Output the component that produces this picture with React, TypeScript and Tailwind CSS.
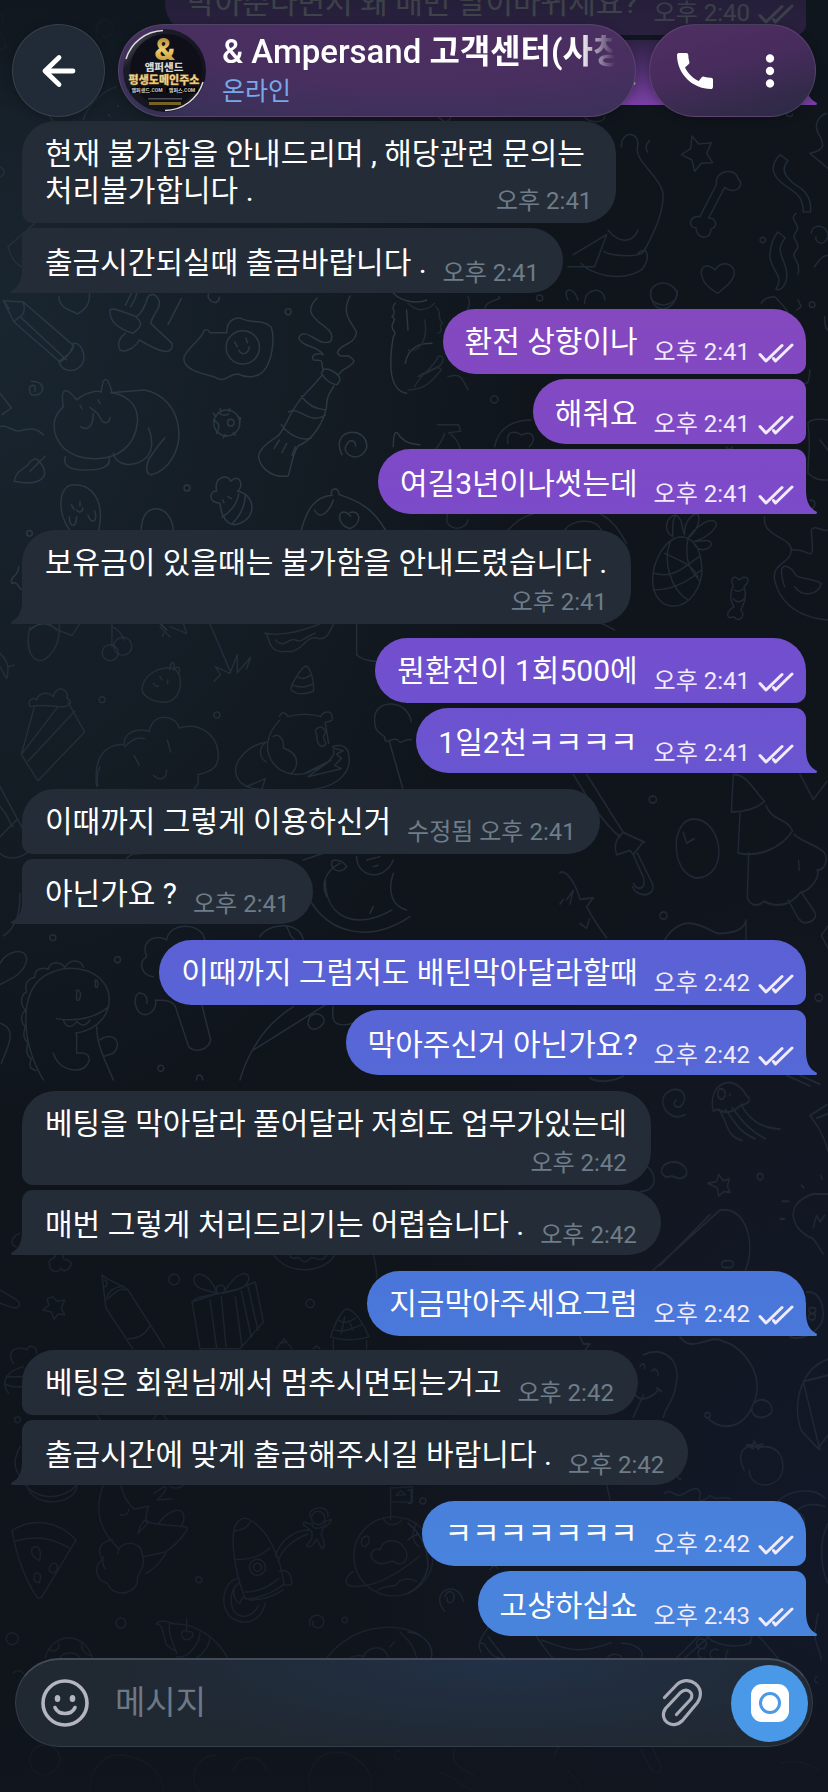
import { clsx } from 'clsx';
import { MdCall, MdMoreVert } from 'react-icons/md';

interface Message {
  out?: boolean;
  lines: string[];
  time: string;
  wide?: boolean;
}

// Consecutive messages from one side share a group; only the last one gets a tail.
const groups: Message[][] = [
  [
    { out: true, lines: ['막아준다면서 왜 매번 말이바뀌세요?'], time: '오후 2:40' },
    { out: true, lines: ['.'], time: '오후 2:41', wide: true },
  ],
  [
    { lines: ['현재 불가함을 안내드리며 , 해당관련 문의는 ', '처리불가합니다 .'], time: '오후 2:41' },
    { lines: ['출금시간되실때 출금바랍니다 .'], time: '오후 2:41' },
  ],
  [
    { out: true, lines: ['환전 상향이나'], time: '오후 2:41' },
    { out: true, lines: ['해줘요'], time: '오후 2:41' },
    { out: true, lines: ['여길3년이나썻는데'], time: '오후 2:41' },
  ],
  [{ lines: ['보유금이 있을때는 불가함을 안내드렸습니다 .', ''], time: '오후 2:41' }],
  [
    { out: true, lines: ['뭔환전이 1회500에'], time: '오후 2:41' },
    { out: true, lines: ['1일2천ㅋㅋㅋㅋ'], time: '오후 2:41' },
  ],
  [
    { lines: ['이때까지 그렇게 이용하신거'], time: '수정됨 오후 2:41' },
    { lines: ['아닌가요 ?'], time: '오후 2:41' },
  ],
  [
    { out: true, lines: ['이때까지 그럼저도 배틴막아달라할때'], time: '오후 2:42' },
    { out: true, lines: ['막아주신거 아닌가요?'], time: '오후 2:42' },
  ],
  [
    { lines: ['베팅을 막아달라 풀어달라 저희도 업무가있는데', ''], time: '오후 2:42' },
    { lines: ['매번 그렇게 처리드리기는 어렵습니다 .'], time: '오후 2:42' },
  ],
  [{ out: true, lines: ['지금막아주세요그럼'], time: '오후 2:42' }],
  [
    { lines: ['베팅은 회원님께서 멈추시면되는거고'], time: '오후 2:42' },
    { lines: ['출금시간에 맞게 출금해주시길 바랍니다 .'], time: '오후 2:42' },
  ],
  [
    { out: true, lines: ['ㅋㅋㅋㅋㅋㅋㅋ'], time: '오후 2:42' },
    { out: true, lines: ['고샹하십쇼'], time: '오후 2:43' },
  ],
];

// The fixed attachment lets every sent bubble show its own slice of one gradient.
const outFill =
  'bg-fixed bg-[linear-gradient(180deg,#8b46b6_0%,#8448bf_18%,#7d4ac8_27%,#7050cf_38%,#5a62d5_54%,#4a76da_72%,#4882dc_86%,#4886de_100%)]';

const doodles = [
  {
    at: 'translate(408 0) scale(.3333)',
    color: '#212b35',
    d: 'M852 408l20 24 38-4-14 32 18 28-34 2-20 24-8-34-32-16 28-18zM926 552l-50 98c-30-6-40 32-12 34 0 36 48 36 44 4 26-12 14-34-6-34l48-92c30 26 64-6 40-26-6-36-72-24-64 16zM1116 464l24 18c-30 32 4 62 40 84 26 20 30 44 28 70h-22c0-44-20-56-50-76-50-34-50-64-20-96zM1164 640c-26 20 20 34 0 56s20 34 0 56 18 30 6 70M1110 696l22 18c-40 44 12 70 4 120-4 30-24 40-32 32 30-40-24-60-18-104 2-30 10-50 24-66zM930 880c-80-42-50-110-8-70 20-42 90-8 38 44zM640 440c0-54 60-44 48 4-6 40 62 80 76 130 8 60-30 130-56 180-20 24-110 10-120 0M690 760c30-30 40 20 10 50-60 40-160 10-180-20M600 690c40 50 80 30 90 0M480 800h80l36-96-100 60M1210 700c0-30 50-30 50 10-10 30-40 20-36 0M1220 800c20-30 30-40 60-30M1206 460c50-10 40-30 30-50-20-30-10-60 20-70M1206 460l60 50M728 890c-8-50 70-56 80-6-10 40-70 40-80 6zM480 900c-20-40 20-40 30 0M530 910c0-50 60-50 60-10M1064 712a8 8 0 1 0 1 16 8 8 0 1 0-1-16M724 422c-12 14-12 20-6 34M90 350c20 20 30 20 40 0M530 350c10 20 60 20 60 0M1136 342c0 10 18 10 18 0',
  },
  {
    at: 'translate(0 0) scale(.3333)',
    color: '#22303b',
    d: 'M316 60c-30 4-30 50 0 50 40-4 30-60-12-50-20 10-20 60 0 66M250 360c10-40 60-90 100-100M150 350l14 20M24 740l80-70M24 740c10 40 30 60 50 60M0 40c10 10 12 30 8 40M0 500c16 10 16 26 0 30M0 100l20 40-20 10M352 316l4 4M326 344l4 4',
  },
  {
    at: 'translate(0 290) scale(.3333)',
    color: '#2a3843',
    d: 'M10 32l60 4 150 130c-8 20-20 40-40 50L42 96zM10 32l18 24M42 96c10-20 40-10 28-60M60 80l140 130M176 214c10-6 50-30 44-54 20-4 40 30 28 60-20 30-60 30-72-6M176 20c4 40 40 40 56 52 20-10 40-30 36-60M330 60c10-10 50 10 78 20 20 20 20 30-10 50-60-20-70-50-68-70zM408 80c20-10 30-40 36-60 20-20 40 10 32 30s-20 30-24 50l64 60c4 20-10 26-24 24s-50-20-74-34c-10 20-40 40-58 30-10-20 0-40 16-50M376 46c10-20 16-30 20-40M392 50c10-16 16-30 18-40M544 26l-40 78M680 128c0-40 30-50 50-40 30 12 60 0 84 24 10 30 4 80-10 110-20 50-70 40-90 30-30 0-40 30-68 10-30-10-100-20-94-60 10-30 50-50 60-80 10-6 16 0 18 6zM728 122a50 50 0 1 0 1 100 50 50 0 1 0-1-100M704 156l8 14M738 144l4 14M716 180c10 20 30 10 32-10M864 56a9 9 0 1 0 1 18 9 9 0 1 0-1-18M626 12c-10 20 30 40 32 10M190 350c-10-60 10-60 40-20 20-20 60-30 74-24 4-50 20-50 32 2 60 10 80 50 76 90-6 70-60 110-130 108-80 0-120-50-120-100 0-20 10-40 28-56M332 308l100-8c60 10 100 60 104 120 6 60-30 120-80 134-30 0-10-50 0-60 10-16 20-30 38-50M340 490c10 40 60 40 90 20 30-20 30-60 16-96M196 500c-10 30 20 40 60 40 50 0 80-10 70-40M240 346l6 10M294 330l6 10M270 352c10 10 20 10 30 30 10 26 30 16 30 0M280 370c0 50-26 50-38 40M680 360a38 38 0 1 0 1 78 38 38 0 1 0-1-78M692 388a10 10 0 1 0 1 20 10 10 0 1 0-1-20M640 390c20 10 20 20 10 40M656 366c10 14 20 10 30 6M712 380l10 4-4 16M640 370l8 10M660 356l4 8M690 356l-2 8M670 444l6-10M706 436l-6-8M970 240c10-10 50 10 50 30l-8 14c-20 0-40-20-48-34zM964 258c-40 50-50 50-70 80-30 40-40 80-60 100-30 20-60 40-58 66 10 40 50 60 88 54 10-20 10-60 30-90 50-20 80-80 86-120 0-30 10-40 22-60M904 318c20 30 50 40 74 42M866 366c30-20 60 40 110 10M844 404c20 30 60 50 90 40M838 450l-16 26M860 460l-14 28M886 470l-10 26M970 240c-10-20 10-30-30-30-10-20 20-20 30-16-20-30-60-20-74-50 20-40 60 30 96 10 20-40-50-50-60-90 0-20 10-30 20-40M1018 252c10-20 40-20 44-40-20-30-40 0-50-24 10-30 50-20 58-60-10-30-50-50-20-110M1180 10c30 30 80 30 100 20M1186 40c-20 20 10 20-10 40 20 10-10 20 4 40 10 10 0 20 0 20-10 60-20 160 40 170M1216 220c10-60 60-60 80-60M1220 60l4 60M1026 494c-40-80 80-90 74-20-20 50-80 20-60-10 10-20 30-10 26 4M104 304c10-30-30-20-10 10 40 10 50-40 0-40M42 574c10-40 30-30 50-60 10-10 20-10 30 6 30 40 0 70-80 54M90 544l46-46M222 584c70 0 90 70 74 136M222 584c-50 0-50 90-14 134M240 634v14M214 644l8 14M230 660c10 14 20 0 18-6M208 680c0 30 20 40 22 0M264 676c10 30 30 20 20-14M424 720c0-90 90-80 96 0M80 730a8 8 0 1 0 17 0 8 8 0 1 0-17 0M552 594a9 9 0 1 0 18 0 9 9 0 1 0-18 0M650 604c-10-50 40-50 42-30 30-30 40 20 20 30 60 10 60 90-8 100-20 0-40-20-44-64-40-4-30-40-10-36M736 612c0 40-20 70-40 90M716 612c-4 30-20 50-50 70M668 630l4 8M684 620l10 6M904 720c16-60 40-100 92-104-10-20 20-30 22-2 60 20 100 40 138 106M944 660c20 40 50-10 56-30M1050 668c30-10 40 30 0 48-40-10-40-60-10-48l12 10M0 410c20-10 40 20 60 12 40-10 50-6 70 12M0 310l34 44-28 20M36 880c-10-20 20-20 20-50M36 880c20-10 20 20 28 18M1180 470c0-50 10-50 20-30 20 20 30 20 60 24M90 1020c30-30 60-20 80 0M480 1000l20 20',
  },
  {
    at: 'translate(408 290) scale(.3333)',
    color: '#212a35',
    d: 'M0 40c30 30 60 20 80 0M84 50c20 20 0 30 20 50-20 10 10 20-14 30M50 90c10 50-10 100-50 90M180 20c20 50-40 30 20 110M232 60c-10-30 60-30 40-40M20 290c10-30 60-60 70-90 20-10 20 20 0 30s-50 20-60 30c40-10 60-40 70-20-20 20-40 60-100 60M120 260c40-10 40 0 60 40M386 24a9 9 0 1 0 18 0 9 9 0 1 0-18 0M248 328a11 11 0 1 0 22 0 11 11 0 1 0-22 0M260 470c10-60 60-80 110-80M300 460c-10-50 40-30 40-24 30-20 50 10 24 34M88 404h64l6 20-36 4c30 20 30 40 36 50M110 430c-10 30-20 40-30 50M728 0c-4 80 80 70 80 0M1060 40c10-20 30-20 40-20 20 20 40 40 40 50M1170 30l10 20-14 10M1204 44a8 8 0 1 0 17 0 8 8 0 1 0-17 0M1200 400c10-20 60-10 60-10M1200 400c10 60 0 100 0 150 20 20 40 20 60 20M1236 450l24 30M1250 80c0 40 10 40 10 40M1206 240c-4 50-10 40-20 40M956 470a8 8 0 1 0 16 0M1206 630c20 0 20 20 0 30M120 670c-20 50 50 60 60 20M300 720c20-20 40-40 80-50M470 720c20-30 90-40 110 0M576 670c50 30 60 60 80 90M794 740c-30-20-20-60 10-66M794 740c0-40 0-70 16-60s10 40 20 54c-4-40 30-70 40-60 10 20-10 60-30 70 20-30 60-60 80-50s-20 50-60 60c20 0 50-10 50 10-10 20-40 20-50 0M824 740c-50 0-90 70-90 130 0 50 30 80 64 78 50 0 84-60 84-110-4-60-20-90-58-98zM740 850c60 20 100-30 134-50M736 900c60 0 110-30 144-60M790 750c-30 60 0 150 50 180M840 744c-10 60 0 90 36 130M770 790c40 20 80 30 100 70M976 890c-10-20 0-40 18-20 20-20 40 0 14 20 10 30 0 50-10 70 20 20-10 40-20 20-20 10-30-10 0-30-14-20-10-50-2-60zM980 900c10 10 20 0 28-4M976 926c10 14 24 10 34 0M1070 680c-10 60 80 60 80 100s-60 40-50 90c10 50 50 110 160 120M1130 890c-30-90 20-60 30-40s40 10 80 30c-10 40-60 40-80 10M1150 780c60-10 70 60 60-60 10-20 40 10 48 0M480 990c60-20 80 0 140 30',
  },
  {
    at: 'translate(0 620) scale(.3333)',
    color: '#232e39',
    d: 'M90 20c-20 80 20 130 60 84 20-20 30-50 28-90M150 10c10 20 50 30 66 36l24-36M336 10v70M336 20c20 10 30 20 36 40M330 74a24 24 0 1 0 1 48 24 24 0 1 0-1-48M368 52a27 27 0 1 0 1 54 27 27 0 1 0-1-54M0 100c20 20 30 40 20 76L0 140M24 140l18-4M480 20l30 30M490 40l-2 10M510 20l50 20-10-30M630 12l60 140M690 160l-44-20 16 24-20 20M690 160l22-56v54l40-46-12 34M800 40c10 40 20 60 60 54 40 10 60-50 90-40s40-20 50-40M794 40c60 10 120-10 170-30M826 60c30 30 40-10 60 0s30-10 60-20M1070 12v92c20 20 60 20 60 20M430 190c10-30 50-50 90-46 30 20 30 80-10 100-30 10-100-10-80-54zM510 150c0-30 20-30 10 0 20-20 20 0 16 10M460 190c6 10 12 10 16 8M480 170l6 10M504 180l-2 10M918 138c-10 0-50 60-44 72 20 20 50 10 66 4 4-20-6-70-22-76zM890 170c20 10 30 4 40-4M878 196c30 10 40 4 62-4M90 260c-10-20 10-30 20-20 10-30 40-20 50-10 10-40 50-20 40 4 20 10 10 20 0 24-20 10-50-10-110 2zM102 264L64 404l50 78 140-146-50-90M64 404l110-144M84 424l140-150M306 230a9 9 0 1 0 1 18 9 9 0 1 0-1-18M650 276a9 9 0 1 0 1 18 9 9 0 1 0-1-18M290 500c-10-80 20-130 82-126 0-40 40-50 76-40 10-60 80-50 90-10 60-20 110 20 116 70s-20 60-60 70c0 20 4 30-10 40M374 380c20-20 40-30 60-24M402 406l16 30M502 360l10 36M460 466c20 20 40 10 40-16M300 440c-10 20-10 40-6 56M838 290c10-20 20-10 26 0 30-10 70-10 98 0 10-20 40-20 34 10-10 10-20 0-20 10l10 60M840 300c-40 40-50 90-20 130 30 40 90 40 120 20 40-10 70-50 60-60M850 384c60 20 40 70 20 78M820 350c10-10 34 0 30 34M946 330c20-20 30 0 30 10-20 20 20 30-10 40-20-10-10-20-20-50zM800 366c-60 10-100 60-92 94 10 60 100 50 200 50s140-50 140-90-20-50-50-40M800 366c-30 20-20 50 0 60M914 460l80-40-70 50 100-24-20-10 20-20-14-14 20-10-30-8M740 500l56-24-10 30M1124 296c0-60 100-60 110 10M1124 300c0 40 20 40 30 50 0 30 20 0 40 10 10 20 20-10 40 0M1168 364l40 140M0 500l70 130M0 560c30 30 30 60 40 60M0 700c20 20 60 20 90-10M0 650l50-50M60 820c0 60-10 100-50 128M158 944a9 9 0 1 0 1 18 9 9 0 1 0-1-18M0 1030c20-40 80-50 80-10-10 50-60 60-80 74M352 1010a9 9 0 1 0 1 18 9 9 0 1 0-1-18M130 1380c-70-120-70-260 0-310 80-50 180-20 196 50 10 60-30 110-100 120M170 1196c60 10 110 0 154-34M190 1200c10 30 30 20 40 4 20 20 30 10 40-4M76 1220c-20-20-10-40 0-50-20-20-10-50 4-54-10-30 10-40 24-44 0-30 30-30 40-24 10-30 40-20 50-6 20-30 50-20 56 0M76 1220c-10 30 0 40 8 50-10 30 0 40 10 46-10 30 0 30 14 36M230 1110c20 0 10 40 0 30zM286 1080c10 0 10 30 0 20zM230 1240v60c60-10 40 50 0 50s-60-20-70-50M290 1220c0 60 30 110 50 160M300 1260c40-30 70 10 40 40l-30 10M0 1210c30 10 40 30 20 80l-16 40M440 1010c-20-50 30-70 60-50 10-60 110-50 114 0M440 1010c-30 20-10 60 20 60M440 1150c10-30-40-50-34 0 10 60 70 30 60-10 20 0 50 0 60 20l40 120c20 20 60 10 66-20l-26-104M482 1336a9 9 0 1 0 1 18 9 9 0 1 0-1-18M720 1380c30-100 80-170 160-220M760 1290l240-150M930 1190c20-20 50 0 40 20-20 30-60 20-40-20zM1000 1160c-10 60 20 60 60 50M780 950c20-40 120-50 130 10M860 920c10 20 10 30 24 40M910 800c60 150 200 170 320 90M976 780c0 120 100 150 200 90M1070 710c0 60 80 80 110 10M1000 720c-20 20 20 50 40 20-10-20-30-20-40-20M1180 760c-20 60 0 100 40 110M910 720l60-20M980 830c-20-40 0-80 40-100M1110 880l10-20M1100 720l40-10M1120 740l14-4M380 715c20-20 30-10 40-15M590 1380c0-20 16-20 18 0',
  },
  {
    at: 'translate(560 770) scale(.3333 .4464)',
    color: '#202834',
    d: 'M80 10l110 130M40 10c40 50 90 110 140 140M190 140c-20 10-30 30-20 50l40-10 10 10 30-30M190 140l64 22M220 190l30 50c10 30-20 30-30 14M232 186l46 70c10 30-50 30-60 6M278 58a11 8 0 1 0 1 16 11 8 0 1 0-1-16M400 110c90 0 110 130 10 132-80-10-80-130-10-132zM370 140l10 24 22-10M520 10l-6 84c50 0 80-10 100-24-30-20-50-60-94-60zM540 96l-6 90c60 10 130-10 164-50-20-30-60-20-80-56M566 186l-4 100c10 20 30 20 50 8 50 20 90 0 110-20 20 0 60-30 50-50 30 0 30-30 20-40-30-20-60-20-90-40M684 292c20 20 30 50 50 50s40-10 30-24l-40-44M716 204l2 20M310 318a11 8 0 1 0 1 16 11 8 0 1 0-1-16M314 380c60-70 130-20 160-14 50 0 80-10 84-30v50M0 230c20-10 50 30 60 60l40-4-20 20c20 30 40 50 60 70M20 290l20-20-10 30M60 344l20 10 8-20M0 300l10-10M776 502a11 8 0 1 0 1 16 11 8 0 1 0-1-16M720 10l40 56 40-40M804 350l-20 20 20 30M376 772c-50 20-90-30-54-50 40-20 70 10 40 32-20 4-24-8-14-14M460 764c-20-60 60-90 100-34 20 10 0 20-16 20-30 20-50 20-70 10zM480 714c20 0 20 20 4 24-14-4-14-18-4-24M476 760c30 30 20 60 70 70M496 760c30 30 40 50 90 66M516 756c30 30 50 50 100 70M544 750c20 30 60 54 116 54M510 726v4M680 684l70 24M720 684l60 20M750 774l50-24M750 774c20 20 40 40 54 80M770 780l34-10M304 900c0-30 80-30 76 6-20 20-40 0-50 4s-20 0-26-10zM476 906l14 14 18-4-6 16 8 14-18-2-16 10-4-18-28-10 26-4zM600 904a9 7 0 1 0 1 14 9 7 0 1 0-1-14M280 1120l200-134c80-10 110 80 76 134M300 1110l150-114M502 1100a12 8 0 1 0 1 14 12 8 0 1 0-1-14M760 950c-90 20-70 80 0 100l30 34M804 950l-44 0M760 1024l10-26 10 14 14-14M666 966h20M660 1006h14M724 930l8 6M782 908l4 8M250 884c40 10 50 60-10 60M740 1170c30-4 50 20 50 50s-50 60-100 50M756 1204c20 0 10 14 0 14-14-4-10-14 0-14M756 1218c14 0 14 14 0 14s-14-14 0-14M360 1270c40 40 90-10 130 10 60 10 130 80 90 140-20 30 30 40 54 20 10-24-30-40-54-20-30 60-100 60-140 30M450 1448a8 6 0 1 0-2 2M60 1270l10 16 20 0-14 12 4 10M220 1450l30-50M250 1310c60-20 110 10 100 60s-30 50-40 80M226 1400c20 20 60 0 70-14M240 1336c10-10 14-6 14 4M276 1346c10-8 20 0 18 10M290 1384l14 8M804 1320c-80 20-110 100-80 160l50 40 30-30M730 1370l50 154M730 1370l74-14M552 1568c-30-50 20-60 40-50 60-10 80 20 76 50M580 1520l-20-8 20 0 2-10 8 12 18-4-14 12M90 690c20 10 60 10 100-4',
  },
  {
    at: 'translate(0 1220) scale(.3333)',
    color: '#1c242f',
    d: 'M60 40c-30 10-30 40-10 40M164 100c10 20-20 10-16 30 0 30 30 30 34 14 10 20 30 0 32-14-10-20-30 0-24-30M0 210l50 30c20 16 0 30-20 20L0 250M158 230l14 14 22-4-10 24 10 20-20-2-12 16-8-22-26-6 18-14-4-20zM306 164l8 70 4 30 80 122M306 164c20 20 60 30 78 46l110 172M316 240c20-10 40-40 60-30M384 356c30 0 50-10 66-40M314 180c10 4 10 20 0 20M320 230c10-20 30-30 50-32M522 162a16 16 0 1 0 1 32 16 16 0 1 0-1-32M930 238a12 12 0 1 0 1 25 12 12 0 1 0-1-25M576 246l24 140h120l70-80-24-120-50 20-80 20zM576 246c20-20 30-14 70-24M706 230l20 150M630 240l20 144M664 230l14 150M724 212l30 140M744 200l30 130M650 220c-20-70-80-70-66-30 10 20 40 20 66 30zM670 220c40-70 80-70 76-40-10 30-40 30-76 40zM650 200c20-10 30 0 20 20h-20zM820 104c50 70 160 50 184 0M870 106c10 20 20 0 30 10s20 14 30 0 30 20 50-10M1120 104c10 30 10 60 10 70M1040 266c-20 10-40 60-48 84 30 14 90 10 114 0-10-30-40-80-66-84zM1000 360v26M1100 360v26M1016 300c10 10 30 10 50-6M1006 330c30 10 60-10 80-16M1034 290l-10 50M1050 310l10 20M830 386l22-30 24 30M840 370l20-4M940 386l10-8 10 8M70 440c-70 20-60 60-44 80M40 430c-30-50 30-50 40-40 10-20 30-10 30 10M20 470h50M14 490c20 16 40 10 54 10M52 590a9 9 0 1 0 1 18 9 9 0 1 0-1-18M60 680c-20 40-20 60 0 90 40 80 130 70 170 26M290 584l10 14M490 584l10 14M460 598l10-14',
  },
  {
    at: 'translate(0 1470) scale(.3333)',
    color: '#1b222d',
    d: 'M36 182c60-40 140-30 192 28L126 380q-8 8-16 0C70 320 50 260 36 182zM46 214c60-20 110-10 166 22M96 236c20-20 30 10 22 36-20-10-26-20-22-36zM148 300c0-20 20-30 24-10 0 20-20 24-24 10zM102 324c0-20 20-20 20 0l-4 14c-10 0-16-6-16-14zM310 44c-30 80-10 140 46 192M362 44c10 40 20 50 40 74l44-10c-20 60-10 50 110 62 20 0-20 50-60 76l-66 14M476 160c20-30 70-60 76-20 0 20-10 30-10 30M414 190l30-30-10-10-14 20zM360 134c20 4 26-4 26-16M462 70l30-20c10 0 10 10-20 40l44-4M510 50c20 10 40 0 44-10M354 250c0-40 70-40 72 0 10 30 0 50-14 70 10 50-70 70-90 20-40-10-40-60-14-70-30-50 20-60 30-60M438 310c20-10 40-30 60-60M310 260c-4 16 0 30 8 38M702 180c-10 50 10 150 34 206 30 4 90-20 116-44-10-80-50-170-110-196-20-6-34 10-40 34zM704 182c20 0 40-10 46-26M704 268c40 4 80-10 106-34M736 366c40 0 70-14 100-40M750 390c40 0 70-10 100-30M772 268a24 24 0 1 0 1 48 24 24 0 1 0-1-48M772 280a12 12 0 1 0 1 24 12 12 0 1 0-1-24M716 324c-50 10-60 90-20 120 50 30 90 0 100-44M716 340c-30 20-30 80 0 96 30 10 50-10 60-30M704 350c-10 30 10 50 16 50 0-10 10-20 14-20M838 304c30-10 40 20 36 40l-24 2M826 260c10-40 50-80 100-80M834 276c10-40 50-70 90-84M954 124a20 20 0 1 0 1 40 20 20 0 1 0-1-40M930 140c-10-30 60-40 54 0M936 160c0 20 30 20 40 0M936 164l-24-8c-10 10 20 20 24 30v20l-16 20c10 10 20 0 30-20l16 30c10 0 10-20-2-40l4-20c20-10 30-30 24-28l-24 10M1172 150V54l66-4v46h-66M1188 76l14-14 14 12zM1180 140a119 119 0 1 0 1 238 119 119 0 1 0-1-238M1060 304c-40 30-20 50 20 44 60 0 130-50 180-90M1120 270c-20-20 10-40 20-30 10-40 60-30 70-10 20 20 10 60-20 50-20-20-40 20-70-10zM1084 220c0-20 20-30 24-14 0 20-20 34-24 14zM1150 144c10 30 50 20 54 4M1130 364c20-20 40-10 60-20 10-20 40-20 60-10M1250 160c-20 30-10 60 8 70M596 320a9 9 0 1 0 1 18 9 9 0 1 0-1-18M362 444a15 15 0 1 0 1 30 15 15 0 1 0-1-30M36 488a18 18 0 1 0 1 36 18 18 0 1 0-1-36M1034 442a8 8 0 1 0 1 16 8 8 0 1 0-1-16M930 466c-10-40 50-40 40-4-10 20-40 10-30-8M136 564c20-80 120-80 140 0M180 564c10-20 50-20 60 0M150 540c20 10 30-10 26-20M248 516c-10 20 10 40 28 40M468 462c20-20 40 0 60 0 60 0 120 40 154 100M468 462c20 0 20 20 30 60 10 10 20 20 30 20M510 460c-10 20 10 60 20 90M560 444v40c-20-10-20 20 0 26 30-10 20-30 4-24M600 490c0 30-40 80-70 70M630 500c0 30-20 50-40 64M980 564c80-100 200-110 280-70M1050 564c20-10 30-10 40-4 10-30 60-40 74 0M1200 486c30 30 40 40 50 78M1170 530l14-14M90 870c0-60 90-60 90 0-10 60-90 60-90 0zM270 960c0-80 60-120 120-100 60 10 100 60 100 100M646 856a65 65 0 1 0 1 130M700 900c20-50 80-50 100 0M930 960c-20-90 60-140 130-100 60 40 60 80 50 106M1200 844a12 12 0 1 0 1 20M82 40a70 50 0 0 0 150 4M40 610c10-10 20-10 30 0',
  },
  {
    at: 'translate(408 1470) scale(.3333)',
    color: '#1e2735',
    d: 'M596 44l10 44M770 70c20-20 30 20 60 0s50-20 46 10c-10 20 20 10 30-4 20 20 40 0 60 10M1024 0c0 60 90 60 100 0M818 10a8 8 0 1 0 1 18M0 60h10v40H0M44 84a9 9 0 1 0 1 18 9 9 0 1 0-1-18M1110 94c40-40 110-40 140-10M1170 120c20-20 60-20 80-10M1260 160c-30 60-20 140 0 180M1160 120c20 10 30 20 30 40M0 160c40 30 60 80 60 130-10 50-40 70-60 80M0 210c20-20 30-10 26-20M110 424c-50-60 40-100 56-30M110 380c10-30 40-10 24 14-10 10-20 0-16-10M246 300c10-20 20-10 24-4M0 486c30 0 80 30 70 78M250 460c-20 30-50 60-30 86M216 520c20-10 20 40 60 44M240 500l50 64M386 500c20 30 40 60 50 64M400 510c60 20 100 50 210 8M640 520c40 0 70 20 60 44M600 560c10-10 30-10 40 0M806 564l70-70M830 564l80-70M880 506a15 15 0 1 0 1 30 15 15 0 1 0-1-30M890 536a15 15 0 1 0 1 28M930 540a15 15 0 1 0 1 24M896 500c20 20 80 40 130 20l6-24M960 540c-10 20-4 24-4 24M1050 496l60 68M1230 430l-10 60c0 30 20 60 20 80M1228 620a9 9 0 1 0 1 18M140 840c-20 50 40 60 60 80M100 910c40 10 60 40 90 50M440 860c0-20 10-20 14-30M700 840l30 60c20 20 40 0 20-30l-16-36M480 900c10 20 40 40 40 66M1120 880c40-10 80 0 110 20',
  },
];

function Wallpaper() {
  return (
    <svg
      aria-hidden="true"
      viewBox="0 0 828 1792"
      preserveAspectRatio="xMidYMid slice"
      className="pointer-events-none absolute inset-0 h-full w-full"
      fill="none"
      strokeLinecap="round"
      strokeLinejoin="round"
    >
      {doodles.map((patch) => (
        <path key={patch.at} d={patch.d} transform={patch.at} stroke={patch.color} strokeWidth="4.500" />
      ))}
    </svg>
  );
}

function ReadTicks() {
  return (
    <svg width="36" height="20" viewBox="0 0 36 20" fill="none" stroke="currentColor" strokeWidth="3" strokeLinecap="round" strokeLinejoin="round" aria-hidden="true">
      <path d="M2 11.500l6 6.500L24 2.500M15.500 15.500l2 2.500L34 2" />
    </svg>
  );
}

function Bubble({ message, first, last }: { message: Message; first: boolean; last: boolean }) {
  const { out, lines, time, wide } = message;
  const head = lines.slice(0, -1);
  const tail = lines[lines.length - 1];

  return (
    <li
      className={clsx(
        'relative flex max-w-[92%] flex-col text-[30px] leading-[37px] text-white',
        first ? 'pt-[14px] pb-[7px]' : 'pt-4 pb-[5px]',
        out ? ['self-end rounded-l-[33px] pr-3 pl-[22px]', outFill] : 'self-start rounded-r-[33px] bg-[#242d37] pr-6 pl-[23px]',
        out && (first ? 'rounded-tr-[33px]' : 'rounded-tr-[11px]'),
        out && !last && 'rounded-br-[11px]',
        !out && (first ? 'rounded-tl-[33px]' : 'rounded-tl-[11px]'),
        !out && !last && 'rounded-bl-[11px]',
        wide && 'min-w-1/2',
      )}
    >
      {head.map((line) => (
        <p key={line} className="whitespace-pre">{line}</p>
      ))}
      <div className={clsx('flex gap-4', tail ? 'min-h-11' : 'min-h-9', out ? 'justify-end' : 'justify-between')}>
        <p className="whitespace-pre">{tail}</p>
        <span className={clsx('flex items-center gap-2 self-end text-2xl leading-[29px] whitespace-nowrap', out ? 'text-[#f1ebfb]' : 'text-[#6f7c89]')}>
          <time>{time}</time>
          {out && <ReadTicks />}
        </span>
      </div>
      {last && (
        <span
          aria-hidden="true"
          className={clsx(
            'absolute bottom-0 h-6 w-3',
            out
              ? ['-right-[11px] [clip-path:path("M0_0H1C1_11_4_18_12_22Q12_24_11_24H0Z")]', outFill]
              : '-left-[11px] bg-[#242d37] [clip-path:path("M12_0H11C11_11_8_18_0_22Q0_24_1_24H12Z")]',
          )}
        />
      )}
    </li>
  );
}

function Avatar() {
  return (
    <svg width="83" height="83" viewBox="0 0 83 83" className="shrink-0" role="img" aria-label="& Ampersand">
      <defs>
        <linearGradient id="gold" x1="0" y1="0" x2="0" y2="1">
          <stop offset="0" stopColor="#8a6420" />
          <stop offset=".5" stopColor="#f0cd6a" />
          <stop offset="1" stopColor="#a87a24" />
        </linearGradient>
        <linearGradient id="rim" x1="0" y1="0" x2="1" y2="1">
          <stop offset="0" stopColor="#74747e" />
          <stop offset=".25" stopColor="#1c1c28" />
          <stop offset=".8" stopColor="#12121d" />
          <stop offset="1" stopColor="#4e4e58" />
        </linearGradient>
      </defs>
      <circle cx="41.500" cy="41.500" r="41.500" fill="url(#rim)" />
      <circle cx="43" cy="41" r="36" fill="#0f0f19" />
      <path d="M3 30A40 40 0 0 1 40 1.500M80 53A40 40 0 0 1 42 81.500" fill="none" stroke="#d9d9de" strokeWidth="1.500" />
      <g textAnchor="middle" fontFamily="Roboto, 'Noto Sans CJK KR', sans-serif" fontWeight="900">
        <text x="42" y="31" fontSize="31" fill="url(#gold)">&amp;</text>
        <text x="41" y="42" fontSize="10.500" fill="#d6d6d6">앰퍼샌드</text>
        <text x="41" y="55" fontSize="11" fill="#f3dc96" stroke="#c89a3a" strokeWidth=".4">평생도메인주소</text>
        <rect x="7" y="58" width="34" height="6" rx="3" fill="#000" />
        <rect x="43" y="58" width="32" height="6" rx="3" fill="#000" />
        <text x="24" y="63" fontSize="5" fill="#b9b9b9">앰퍼샌드.COM</text>
        <text x="59" y="63" fontSize="5" fill="#b9b9b9">앰퍼스.COM</text>
        <rect x="25" y="69" width="34" height="1.500" fill="#4d4d57" />
        <rect x="26" y="73" width="32" height="3" fill="#75641f" />
      </g>
    </svg>
  );
}

const glass = 'border border-white/10 shadow-[0_2px_10px_rgba(0,0,0,0.25)]';

function Header() {
  return (
    <header className="absolute inset-x-0 top-0 z-10 flex items-center gap-[13px] bg-[linear-gradient(180deg,rgba(15,22,30,0.82)_0px,rgba(15,22,30,0.78)_36px,rgba(15,22,30,0.15)_104px,rgba(15,22,30,0)_117px)] px-3 pt-6">
      <button type="button" aria-label="뒤로" className={clsx('flex size-[93px] shrink-0 items-center justify-center rounded-full bg-[#202b37] text-white', glass)}>
        <svg width="36" height="36" viewBox="0 0 36 36" fill="none" stroke="currentColor" strokeWidth="4.800" strokeLinecap="round" strokeLinejoin="round">
          <path d="M32 18H4M18 4.500L4 18l14 13.500" />
        </svg>
      </button>
      <div className={clsx('flex h-[93px] min-w-0 flex-1 items-center gap-4 rounded-full bg-[radial-gradient(110%_150%_at_60%_0%,#4f2e62_0%,#482f60_45%,#3a3158_75%,#2b3149_100%)] pr-4 pl-1', glass)}>
        <Avatar />
        <div className="min-w-0 flex-1 overflow-hidden">
          <h1 className="overflow-hidden text-[33px] leading-10 font-medium whitespace-nowrap text-white [mask-image:linear-gradient(90deg,#000_calc(100%-40px),transparent_calc(100%-4px))]">
            &amp; Ampersand <span className="font-bold">고객센터(사칭</span>
          </h1>
          <p className="pt-[3px] text-[25px] leading-[34px] text-[#77a9ea]">온라인</p>
        </div>
      </div>
      <div className={clsx('flex h-[93px] w-[167px] shrink-0 items-center justify-between rounded-full bg-[linear-gradient(165deg,#502f63_0%,#472c5c_45%,#332a4a_80%,#2c2a45_100%)] pr-5 pl-[21px] text-white', glass)}>
        <button type="button" aria-label="전화">
          <MdCall className="size-12" />
        </button>
        <button type="button" aria-label="메뉴">
          <MdMoreVert className="size-[50px]" />
        </button>
      </div>
    </header>
  );
}

function Composer() {
  return (
    <form
      className="relative z-10 mx-[15px] mt-[22px] mb-[45px] flex h-[89px] shrink-0 items-center rounded-full border border-t-2 border-[#343d49] border-t-[#434b57] bg-[#202832] bg-[radial-gradient(50%_110%_at_62%_0%,#223147_0%,transparent_100%)] pr-[4px] pl-[25px]"
      onSubmit={(e) => e.preventDefault()}
    >
      <button type="button" aria-label="이모티콘" className="shrink-0 text-[#b3b5bf]">
        <svg width="48" height="48" viewBox="0 0 48 48" fill="none" stroke="currentColor" strokeWidth="3.600" strokeLinecap="round">
          <circle cx="24" cy="24" r="22" />
          <path d="M14 28.500c3.500 8 16.500 8 20 0" />
          <ellipse cx="16.500" cy="19.500" rx="2.800" ry="3.500" fill="currentColor" stroke="none" />
          <ellipse cx="31.500" cy="19.500" rx="2.800" ry="3.500" fill="currentColor" stroke="none" />
        </svg>
      </button>
      <input
        type="text"
        aria-label="메시지"
        placeholder="메시지"
        className="ml-[26px] min-w-0 flex-1 bg-transparent text-[33px] leading-10 text-white outline-none placeholder:text-[#6b7987]"
      />
      <button type="button" aria-label="파일 첨부" className="mr-7 shrink-0 text-[#a9acb6]">
        <svg width="42" height="50" viewBox="0 0 42 50" fill="none" stroke="currentColor" strokeWidth="3.200" strokeLinecap="round" strokeLinejoin="round">
          <path d="M3.500 19.500L15 7.500C27-5 47 9 36.500 24.500L21.500 42.500C11 53-3 41.500 4.500 30.500L19.500 14.500C26 9 34 15 29.500 21.500L15.500 36.500" />
        </svg>
      </button>
      <button type="button" aria-label="동영상 메시지" className="flex size-[77px] shrink-0 items-center justify-center rounded-full bg-[#4a98e8]">
        <svg width="38" height="38" viewBox="0 0 38 38">
          <rect width="38" height="38" rx="11" fill="#fff" />
          <circle cx="19" cy="19" r="9.500" fill="none" stroke="#4a98e8" strokeWidth="3" />
        </svg>
      </button>
    </form>
  );
}

export default function App() {
  return (
    <div className="relative flex h-screen flex-col overflow-hidden bg-[#10151c] bg-[radial-gradient(65%_45%_at_0%_18%,#19252f_0%,transparent_100%),radial-gradient(60%_40%_at_100%_85%,#131828_0%,transparent_100%)] font-[Roboto,'Noto_Sans_CJK_KR',sans-serif]">
      <Wallpaper />
      <div className="pointer-events-none absolute inset-x-0 bottom-0 h-32 bg-linear-to-b from-transparent to-[#10151e]/80" />
      <Header />
      <main className="relative flex min-h-0 flex-1 flex-col justify-end px-[22px]">
        {groups.map((group, g) => (
          <ul
            key={g}
            className={clsx('flex shrink-0 flex-col gap-[5px]', g < groups.length - 1 && (group.length === 1 ? 'mb-[14px]' : 'mb-4'))}
          >
            {group.map((message, i) => (
              <Bubble key={i} message={message} first={i === 0} last={i === group.length - 1} />
            ))}
          </ul>
        ))}
      </main>
      <Composer />
    </div>
  );
}
